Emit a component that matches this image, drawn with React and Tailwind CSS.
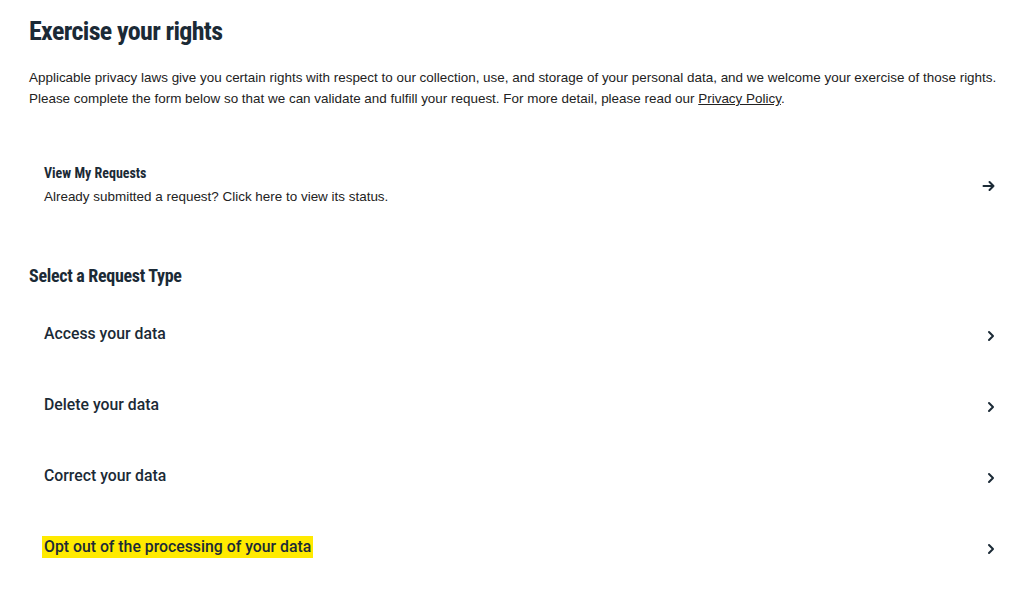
import React from "react";

const Chevron = () => (
  <svg width="12" height="12" viewBox="0 0 12 12" fill="none">
    <path d="M4 2 L8 6 L4 10" stroke="#1b2a36" strokeWidth="2" strokeLinecap="round" strokeLinejoin="round" />
  </svg>
);

const Arrow = () => (
  <svg width="14" height="12" viewBox="0 0 14 12" fill="none">
    <path d="M1.5 6 H11.5 M7.5 2 L11.5 6 L7.5 10" stroke="#1b2a36" strokeWidth="2" strokeLinecap="round" strokeLinejoin="round" />
  </svg>
);

const items = [
  { label: "Access your data" },
  { label: "Delete your data" },
  { label: "Correct your data" },
  { label: "Opt out of the processing of your data", hl: true },
];

export default function App() {
  return (
    <div className="w-[1024px] h-[607px] bg-white text-[#1b2a36] overflow-hidden" style={{ fontFamily: "'Liberation Sans', Arial, sans-serif" }}>
      <div className="pl-[29px] pr-[22px] pt-[14px]">
        <h1 className="text-[26px] leading-[34px] font-bold tracking-[-0.65px] [font-family:Roboto,sans-serif] [font-stretch:condensed]">Exercise your rights</h1>
        <p className="mt-[19px] text-[13.45px] leading-[21px] text-[#222]">
          Applicable privacy laws give you certain rights with respect to our collection, use, and storage of your personal data, and we welcome your exercise of those rights.
          <br />
          Please complete the form below so that we can validate and fulfill your request. For more detail, please read our <span className="underline">Privacy Policy</span>.
        </p>

        <div className="mt-[54px] pl-[15px] flex items-center justify-between">
          <div>
            <div className="text-[14px] leading-[20px] font-bold [font-family:Roboto,sans-serif] [font-stretch:condensed]">View My Requests</div>
            <div className="mt-[5px] text-[13.45px] leading-[18px] text-[#222]">Already submitted a request? Click here to view its status.</div>
          </div>
          <div className="pr-[6px] pt-[3px]"><Arrow /></div>
        </div>

        <h2 className="mt-[58px] text-[18px] leading-[24px] font-bold tracking-[-0.3px] [font-family:Roboto,sans-serif] [font-stretch:condensed]">Select a Request Type</h2>

        <div className="mt-[35px] flex flex-col">
          {items.map((it) => (
            <div key={it.label} className="h-[71px] pl-[15px] pr-[5px] flex items-start justify-between">
              <span className={"text-[15.8px] leading-[22px] font-medium [font-family:Roboto,sans-serif] px-[2px] -ml-[2px] " + (it.hl ? "bg-[#ffea00]" : "")}>{it.label}</span>
              <div className="pt-[7px]"><Chevron /></div>
            </div>
          ))}
        </div>
      </div>
    </div>
  );
}
